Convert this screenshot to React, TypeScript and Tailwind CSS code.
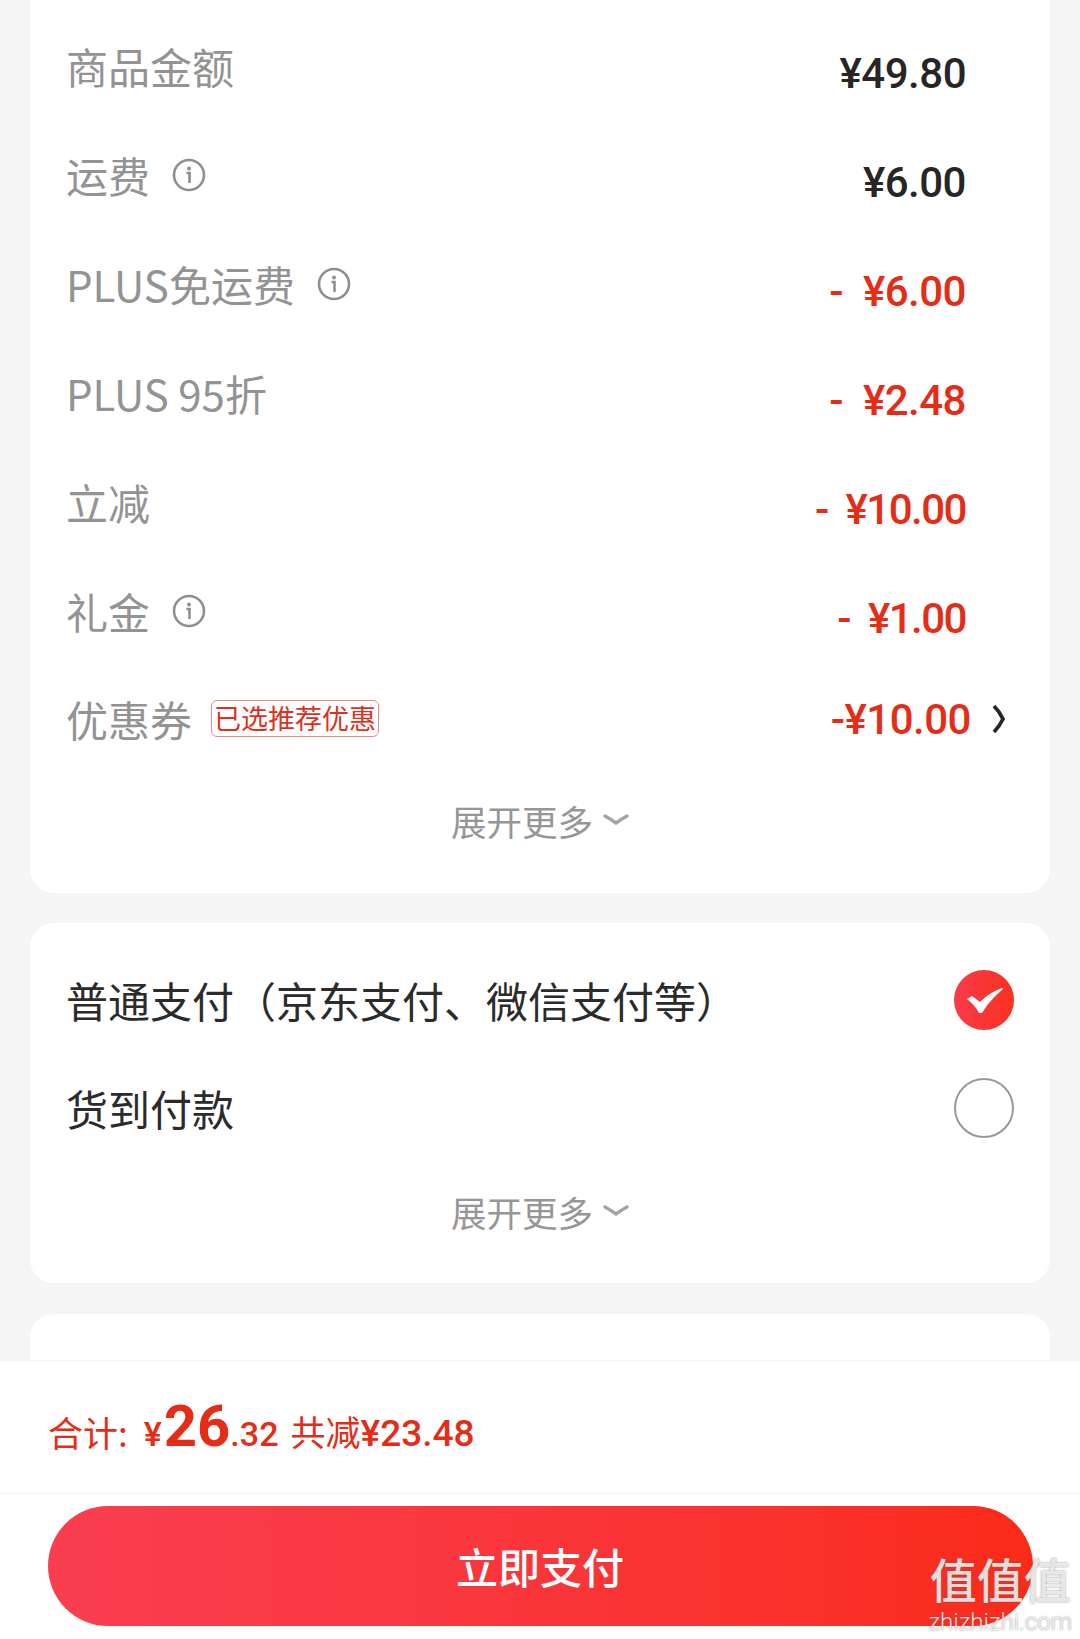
import React from 'react';

const cjk = "font-['Noto_Sans_CJK_SC','Noto_Sans',sans-serif]";
const num = "font-['Roboto','Noto_Sans_CJK_SC',sans-serif]";

const InfoIcon = () => (
  <svg width="34" height="34" viewBox="0 0 34 34" className="ml-[22px] shrink-0" fill="none">
    <circle cx="17" cy="17" r="15" stroke="#8f8f8f" strokeWidth="2.6" />
    <circle cx="17" cy="10.5" r="2" fill="#8f8f8f" />
    <path d="M14.5 15h3v10" stroke="#8f8f8f" strokeWidth="2.6" />
  </svg>
);

const ExpandMore = ({ className }: { className: string }) => (
  <div className={`flex items-center justify-center ${className}`}>
    <span className="text-[35.5px] leading-[40px] text-[#969696] font-normal">展开更多</span>
    <svg width="26" height="14" viewBox="0 0 26 14" className="ml-[10px] mt-[-2px]" fill="none">
      <path d="M2 3c4 2 8 5 11 7 3-2 7-5 11-7" stroke="#a3a3a3" strokeWidth="3.4" strokeLinecap="round" />
    </svg>
  </div>
);

interface RowProps {
  label: string;
  amount: string;
  info?: boolean;
  red?: boolean;
  tight?: boolean;
}

const FeeRow: React.FC<RowProps> = ({ label, amount, info, red, tight }) => (
  <div className="flex items-center justify-between h-[109px] pl-[36px] pr-[84px]">
    <div className="flex items-center -mt-[7px]">
      <span className="text-[42px] leading-[50px] text-[#939393] font-normal">{label}</span>
      {info && <InfoIcon />}
    </div>
    <span
      className={`${num} mt-[8px] whitespace-pre text-[42px] leading-[50px] font-medium ${
        tight ? 'tracking-[-1.5px]' : 'tracking-[-0.5px]'
      } ${red ? 'text-[#e42c17]' : 'text-[#262626]'}`}
    >
      {amount}
    </span>
  </div>
);

export default function App() {
  return (
    <div className={`relative flex flex-col w-[1080px] h-[1639px] overflow-hidden bg-white ${cjk}`}>
      <div className="h-[1360px] overflow-hidden bg-[#f5f5f5] px-[30px]">
        <div className="-mt-[19px] h-[912px] rounded-[24px] bg-white pt-[34px]">
          <FeeRow label="商品金额" amount="¥49.80" />
          <FeeRow label="运费" amount="¥6.00" info />
          <FeeRow label="PLUS免运费" amount="-  ¥6.00" info red />
          <FeeRow label="PLUS 95折" amount="-  ¥2.48" red />
          <FeeRow label="立减" amount="-  ¥10.00" red tight />
          <FeeRow label="礼金" amount="-  ¥1.00" info red tight />
          <div className="flex items-center justify-between h-[100px] pl-[36px] pr-[44px]">
            <div className="flex items-center">
              <span className="text-[42px] leading-[50px] text-[#939393] font-normal">优惠券</span>
              <span className="ml-[19px] -mt-[2px] h-[37px] w-[168px] flex items-center justify-center rounded-[6px] border border-[#e58d85] text-[27px] leading-[34px] text-[#d9321f] font-normal whitespace-nowrap">
                已选推荐优惠
              </span>
            </div>
            <div className="flex items-center">
              <span className={`${num} mt-[2px] text-[42px] leading-[50px] tracking-[-0.5px] font-medium text-[#e42c17]`}>
                -¥10.00
              </span>
              <svg width="14" height="30" viewBox="0 0 14 30" className="ml-[21px]" fill="none">
                <path d="M2 2c4 4 7 9 9 13-2 4-5 9-9 13" stroke="#262626" strokeWidth="3.8" />
              </svg>
            </div>
          </div>
          <ExpandMore className="mt-[32px]" />
        </div>

        <div className="mt-[30px] h-[360px] rounded-[24px] bg-white pt-[28px]">
          <div className="flex items-center justify-between h-[97px] pl-[36px] pr-[36px]">
            <span className="text-[42px] leading-[50px] text-[#2b2b2b] font-normal">普通支付（京东支付、微信支付等）</span>
            <svg width="60" height="60" viewBox="0 0 60 60" fill="none">
              <defs>
                <linearGradient id="check-bg" x1="0" x2="1" y1="0" y2="0">
                  <stop offset="0" stopColor="#f93a4a" />
                  <stop offset="1" stopColor="#f9311f" />
                </linearGradient>
              </defs>
              <circle cx="30" cy="30" r="30" fill="url(#check-bg)" />
              <path d="M13 29l5-3 8 6C33 25 40 21 48 18l1 1C41 26 34 33 28 43h-3C22 37 18 33 13 29z" fill="#fff" />
            </svg>
          </div>
          <div className="flex items-center justify-between h-[120px] pl-[36px] pr-[36px]">
            <span className="text-[42px] leading-[50px] text-[#2b2b2b] font-normal">货到付款</span>
            <div className="h-[60px] w-[60px] rounded-full border-2 border-[#999999]" />
          </div>
          <ExpandMore className="mt-[24px]" />
        </div>

        <div className="mt-[31px] h-[100px] rounded-t-[24px] bg-white" />
      </div>

      <div className="flex items-center h-[134px] pl-[48px] border-t border-[#f2f2f2] border-b text-[#e42c17]">
        <span className="text-[35px] leading-[40px] font-normal mt-[10px]">合计:</span>
        <div className={`${num} flex items-baseline ml-[16px] mt-[-2px]`}>
          <span className="text-[34px] font-medium">¥</span>
          <span className="text-[58px] leading-[70px] font-bold ml-[2px]">26</span>
          <span className="text-[34px] font-medium">.32</span>
          <span className={`${cjk} text-[35px] font-normal ml-[12px]`}>共减</span>
          <span className="text-[37px] font-medium">¥23.48</span>
        </div>
      </div>

      <div className="flex flex-1 justify-center pt-[12px] bg-white">
        <button className="flex items-center justify-center h-[120px] w-[985px] rounded-full bg-gradient-to-r from-[#f93e50] to-[#fb2b18]">
          <span className="text-[42px] leading-[50px] text-white font-medium">立即支付</span>
        </button>
      </div>

      <div className="absolute right-[8px] bottom-[4px] flex flex-col items-center text-white/80 [text-shadow:0_0_2px_rgba(90,90,90,0.8)]">
        <span className="text-[47px] leading-[50px] font-medium whitespace-nowrap">值值值</span>
        <span className={`${num} mt-[6px] text-[24px] leading-[26px] font-light`}>zhizhizhi.com</span>
      </div>
    </div>
  );
}
